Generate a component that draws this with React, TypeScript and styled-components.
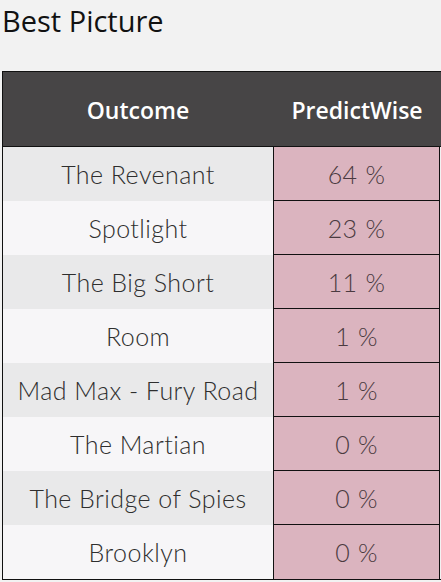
import React from "react";
import styled, { createGlobalStyle } from "styled-components";

const GlobalStyle = createGlobalStyle`
  html, body {
    margin: 0;
    padding: 0;
    background: #f2f2f2;
  }
`;

const Page = styled.div`
  width: 441px;
  height: 582px;
  font-family: "Open Sans", "Noto Sans", sans-serif;
  overflow: hidden;
`;

const Title = styled.h1`
  margin: 0;
  padding: 2px 0 0 2px;
  height: 71px;
  box-sizing: border-box;
  font-size: 29px;
  font-weight: 400;
  color: #111;
  line-height: 38px;
`;

const Table = styled.div`
  margin-left: 2px;
  width: 439px;
  border: 1.5px solid #111;
  border-right: none;
  display: grid;
  grid-template-columns: 270px 1fr;
  box-sizing: border-box;
`;

const HeadCell = styled.div`
  height: 75px;
  background: #474546;
  color: #fff;
  font-size: 23px;
  font-weight: 600;
  display: flex;
  align-items: center;
  justify-content: center;
  padding-top: 2px;
  box-sizing: border-box;
  border-bottom: 1.5px solid #111;
`;

const NameCell = styled.div<{ $shade: boolean }>`
  height: 54px;
  background: ${({ $shade }) => ($shade ? "#e9e9ea" : "#f7f6f8")};
  color: #2e2e2e;
  font-family: "Lato", "Open Sans", sans-serif;
  font-size: 25px;
  font-weight: 300;
  display: flex;
  align-items: center;
  justify-content: center;
  letter-spacing: 0.45px;
`;

const ValueCell = styled.div<{ $last: boolean }>`
  height: 54px;
  background: #dbb4bf;
  color: #4a3a40;
  font-family: "Lato", "Open Sans", sans-serif;
  font-size: 25px;
  font-weight: 300;
  display: flex;
  align-items: center;
  justify-content: center;
  border-left: 1.5px solid #111;
  border-right: 1.5px solid #111;
  border-bottom: ${({ $last }) => ($last ? "none" : "1px solid #111")};
  box-sizing: border-box;
  margin-right: 1px;
  letter-spacing: 0.3px;
  word-spacing: 1px;
`;

const rows: [string, number][] = [
  ["The Revenant", 64],
  ["Spotlight", 23],
  ["The Big Short", 11],
  ["Room", 1],
  ["Mad Max - Fury Road", 1],
  ["The Martian", 0],
  ["The Bridge of Spies", 0],
  ["Brooklyn", 0],
];

export default function App() {
  return (
    <Page>
      <GlobalStyle />
      <Title>Best Picture</Title>
      <Table>
        <HeadCell>Outcome</HeadCell>
        <HeadCell>PredictWise</HeadCell>
        {rows.map(([name, pct], i) => (
          <React.Fragment key={name}>
            <NameCell $shade={i % 2 === 0}>{name}</NameCell>
            <ValueCell $last={i === rows.length - 1}>{pct} %</ValueCell>
          </React.Fragment>
        ))}
      </Table>
    </Page>
  );
}
